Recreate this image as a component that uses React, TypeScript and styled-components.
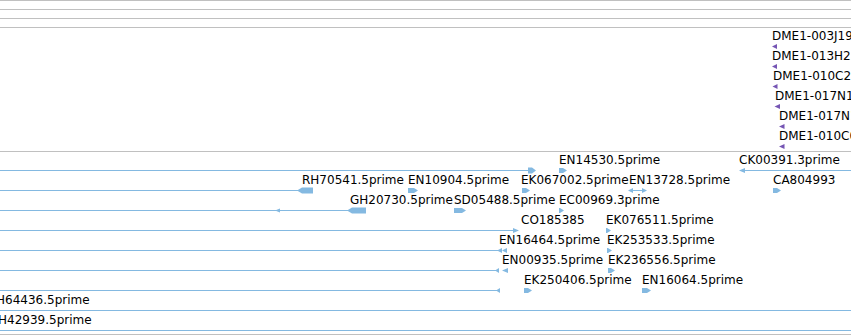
import React from 'react';
import styled, { createGlobalStyle } from 'styled-components';

const Global = createGlobalStyle`
  html, body { margin: 0; padding: 0; background: #ffffff; overflow: hidden; }
  body { font-family: "DejaVu Sans", Verdana, sans-serif; }
`;

const Browser = styled.div`
  width: 851px;
  display: flex;
  flex-direction: column;
  overflow: hidden;
`;

const Track = styled.section<{ $h: number; $last?: boolean }>`
  position: relative;
  flex: none;
  height: ${(p) => p.$h}px;
  border-top: 1px solid #c0c0c0;
  ${(p) => (p.$last ? 'border-bottom: 1px solid #c0c0c0;' : '')}
  display: flex;
  flex-direction: column;
  overflow: hidden;
`;

const Row = styled.div`
  position: relative;
  flex: none;
  height: 20px;
`;

const Label = styled.span`
  position: absolute;
  top: 1px;
  font-size: 12px;
  line-height: 14px;
  white-space: nowrap;
  color: #000000;
`;

const Art = styled.svg`
  position: absolute;
  left: 0;
  top: 0;
  overflow: visible;
`;

type Shape =
  | { k: 'line'; x1: number; x2: number }
  | { k: 'r'; x: number; w: number; h?: number }
  | { k: 'l'; x: number; w: number; h?: number }
  | { k: 'tl'; x: number; w?: number; h?: number }
  | { k: 'tr'; x: number; w?: number; h?: number };

type RowData = { labels: [string, number][]; shapes: Shape[] };

const C = 18.5;

function ShapeEl({ s, color }: { s: Shape; color: string }) {
  if (s.k === 'line') {
    return <rect x={s.x1} y={18} width={s.x2 - s.x1} height={1} fill={color} />;
  }
  if (s.k === 'r') {
    const h = (s.h ?? 5) / 2;
    const a = Math.min(4, s.w);
    const pts = [
      [s.x, C - h],
      [s.x + s.w - a, C - h],
      [s.x + s.w, C],
      [s.x + s.w - a, C + h],
      [s.x, C + h],
    ];
    return <polygon points={pts.map((p) => p.join(',')).join(' ')} fill={color} />;
  }
  if (s.k === 'l') {
    const h = (s.h ?? 5) / 2;
    const a = Math.min(5, s.w);
    const pts = [
      [s.x, C],
      [s.x + a, C - h],
      [s.x + s.w, C - h],
      [s.x + s.w, C + h],
      [s.x + a, C + h],
    ];
    return <polygon points={pts.map((p) => p.join(',')).join(' ')} fill={color} />;
  }
  if (s.k === 'tl') {
    const w = s.w ?? 5;
    const h = (s.h ?? 5) / 2;
    return <polygon points={`${s.x},${C} ${s.x + w},${C - h} ${s.x + w},${C + h}`} fill={color} />;
  }
  const w = s.w ?? 5;
  const h = (s.h ?? 5) / 2;
  return <polygon points={`${s.x + w},${C} ${s.x},${C - h} ${s.x},${C + h}`} fill={color} />;
}

function FeatureRow({ row, color }: { row: RowData; color: string }) {
  return (
    <Row>
      <Art width={851} height={20}>
        {row.shapes.map((s, i) => (
          <ShapeEl key={i} s={s} color={color} />
        ))}
      </Art>
      {row.labels.map(([t, x]) => (
        <Label key={t} style={{ left: x }}>
          {t}
        </Label>
      ))}
    </Row>
  );
}

const dmeRows: RowData[] = [
  { labels: [['DME1-003J19', 772]], shapes: [{ k: 'tl', x: 772, w: 5, h: 5 }] },
  { labels: [['DME1-013H21', 772]], shapes: [{ k: 'tl', x: 772, w: 5, h: 5 }] },
  { labels: [['DME1-010C23', 773]], shapes: [{ k: 'tl', x: 772.5, w: 5, h: 5 }] },
  { labels: [['DME1-017N12', 775]], shapes: [{ k: 'tl', x: 774.5, w: 5.5, h: 5 }] },
  { labels: [['DME1-017N18', 779]], shapes: [{ k: 'tl', x: 779, w: 5.5, h: 5 }] },
  { labels: [['DME1-010C05', 779]], shapes: [{ k: 'tl', x: 779, w: 5.5, h: 5 }] },
];

const estRows: RowData[] = [
  {
    labels: [
      ['EN14530.5prime', 559],
      ['CK00391.3prime', 739],
    ],
    shapes: [
      { k: 'line', x1: 0, x2: 530 },
      { k: 'r', x: 528, w: 8, h: 6 },
      { k: 'r', x: 559, w: 8, h: 5 },
      { k: 'line', x1: 742, x2: 851 },
      { k: 'tl', x: 739, w: 6, h: 5 },
    ],
  },
  {
    labels: [
      ['RH70541.5prime', 302],
      ['EN10904.5prime', 408],
      ['EK067002.5prime', 521],
      ['EN13728.5prime', 629],
      ['CA804993', 773],
    ],
    shapes: [
      { k: 'line', x1: 0, x2: 300 },
      { k: 'l', x: 297, w: 16, h: 6 },
      { k: 'r', x: 408, w: 10, h: 5 },
      { k: 'r', x: 522, w: 8, h: 5 },
      { k: 'line', x1: 630, x2: 645 },
      { k: 'tl', x: 628, w: 5, h: 5 },
      { k: 'tr', x: 642, w: 5, h: 5 },
      { k: 'r', x: 773, w: 8, h: 5 },
    ],
  },
  {
    labels: [
      ['GH20730.5prime', 350],
      ['SD05488.5prime', 454],
      ['EC00969.3prime', 559],
    ],
    shapes: [
      { k: 'line', x1: 0, x2: 348 },
      { k: 'tl', x: 275, w: 5, h: 4 },
      { k: 'l', x: 347, w: 19, h: 6 },
      { k: 'r', x: 454, w: 12, h: 5 },
      { k: 'r', x: 559, w: 5, h: 5 },
    ],
  },
  {
    labels: [
      ['CO185385', 521],
      ['EK076511.5prime', 606],
    ],
    shapes: [
      { k: 'line', x1: 0, x2: 515 },
      { k: 'tr', x: 513, w: 6, h: 5 },
      { k: 'r', x: 606, w: 5, h: 5 },
    ],
  },
  {
    labels: [
      ['EN16464.5prime', 499],
      ['EK253533.5prime', 607],
    ],
    shapes: [
      { k: 'line', x1: 0, x2: 499 },
      { k: 'tl', x: 497, w: 5, h: 5 },
      { k: 'tl', x: 502, w: 5, h: 5 },
      { k: 'r', x: 607, w: 5, h: 5 },
    ],
  },
  {
    labels: [
      ['EN00935.5prime', 502],
      ['EK236556.5prime', 608],
    ],
    shapes: [
      { k: 'line', x1: 0, x2: 497 },
      { k: 'tl', x: 495, w: 4, h: 5 },
      { k: 'tl', x: 502, w: 6, h: 5 },
      { k: 'r', x: 608, w: 7, h: 5 },
    ],
  },
  {
    labels: [
      ['EK250406.5prime', 524],
      ['EN16064.5prime', 642],
    ],
    shapes: [
      { k: 'line', x1: 0, x2: 498 },
      { k: 'tl', x: 496, w: 4, h: 5 },
      { k: 'r', x: 524, w: 8, h: 5 },
      { k: 'r', x: 642, w: 9, h: 5 },
    ],
  },
  {
    labels: [['H64436.5prime', -4]],
    shapes: [{ k: 'line', x1: 0, x2: 851 }],
  },
  {
    labels: [['H42939.5prime', -2]],
    shapes: [{ k: 'line', x1: 0, x2: 851 }],
  },
];

const DmeTrack = styled(Track)`
  padding-top: 0;
`;

export default function App() {
  return (
    <>
      <Global />
      <Browser>
        <Track $h={8} />
        <Track $h={8} />
        <Track $h={8} />
        <DmeTrack $h={123}>
          {dmeRows.map((r, i) => (
            <FeatureRow key={i} row={r} color="#7656b4" />
          ))}
        </DmeTrack>
        <Track $h={182} $last>
          {estRows.map((r, i) => (
            <FeatureRow key={i} row={r} color="#84b9e1" />
          ))}
        </Track>
      </Browser>
    </>
  );
}
